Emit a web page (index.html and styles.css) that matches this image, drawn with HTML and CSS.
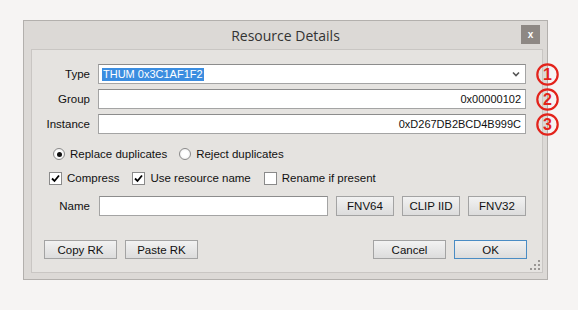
FILE: index.html
```html
<!DOCTYPE html>
<html lang="en">

<head>
    <meta charset="UTF-8">
    <title>Resource Details</title>
    <link rel="stylesheet" href="styles.css">
</head>

<body>
    <div class="window">
        <div class="titlebar">
            <span></span>
            <div class="title">Resource Details</div>
            <button class="close">x</button>
        </div>

        <div class="panel">
            <div class="fields">
                <label class="lbl">Type</label>
                <div class="field combo">
                    <span class="sel">THUM 0x3C1AF1F2</span>
                    <svg class="arrow" width="8" height="6" viewBox="0 0 8 6"><polyline points="1,1.5 4,4.5 7,1.5" fill="none" stroke="#555" stroke-width="1.6"/></svg>
                    <svg class="mark" width="23" height="23" viewBox="0 0 23 23"><circle cx="11.5" cy="11.5" r="10.2" fill="none" stroke="#e3231b" stroke-width="2.2"/><text x="11.5" y="17" text-anchor="middle">1</text></svg>
                </div>

                <label class="lbl">Group</label>
                <div class="field hex">0x00000102<svg class="mark" width="23" height="23" viewBox="0 0 23 23"><circle cx="11.5" cy="11.5" r="10.2" fill="none" stroke="#e3231b" stroke-width="2.2"/><text x="11.5" y="17" text-anchor="middle">2</text></svg></div>

                <label class="lbl">Instance</label>
                <div class="field hex">0xD267DB2BCD4B999C<svg class="mark" width="23" height="23" viewBox="0 0 23 23"><circle cx="11.5" cy="11.5" r="10.2" fill="none" stroke="#e3231b" stroke-width="2.2"/><text x="11.5" y="17" text-anchor="middle">3</text></svg></div>
            </div>

            <div class="radios">
                <label class="opt"><span class="radio on"></span>Replace duplicates</label>
                <label class="opt"><span class="radio"></span>Reject duplicates</label>
            </div>

            <div class="checks">
                <label class="opt">
                    <span class="check"><svg width="11" height="11" viewBox="0 0 11 11"><polyline points="2,5.5 4.5,8 9,2.5" fill="none" stroke="#000" stroke-width="1.8"/></svg></span>Compress
                </label>
                <label class="opt">
                    <span class="check"><svg width="11" height="11" viewBox="0 0 11 11"><polyline points="2,5.5 4.5,8 9,2.5" fill="none" stroke="#000" stroke-width="1.8"/></svg></span>Use resource name
                </label>
                <label class="opt"><span class="check"></span>Rename if present</label>
            </div>

            <div class="fields name-row">
                <label class="lbl">Name</label>
                <div class="name-line">
                    <div class="field name"></div>
                    <button class="btn small">FNV64</button>
                    <button class="btn small">CLIP IID</button>
                    <button class="btn small">FNV32</button>
                </div>
            </div>

            <div class="bottom">
                <button class="btn wide">Copy RK</button>
                <button class="btn wide">Paste RK</button>
                <span class="spacer"></span>
                <button class="btn wide">Cancel</button>
                <button class="btn wide ok">OK</button>
            </div>

            <svg class="grip" width="10" height="10" viewBox="0 0 10 10">
                <rect x="8" y="0" width="2" height="2" fill="#9a9794"/>
                <rect x="4" y="4" width="2" height="2" fill="#9a9794"/>
                <rect x="8" y="4" width="2" height="2" fill="#9a9794"/>
                <rect x="0" y="8" width="2" height="2" fill="#9a9794"/>
                <rect x="4" y="8" width="2" height="2" fill="#9a9794"/>
                <rect x="8" y="8" width="2" height="2" fill="#9a9794"/>
            </svg>
        </div>
    </div>
</body>

</html>
```

FILE: styles.css
```css
body {
    margin: 0;
    padding: 20px 0 0 23px;
    background: #f6f4f3;
    font-family: 'Liberation Sans', Arial, sans-serif;
    font-size: 11.5px;
    color: #111;
}

.window {
    width: 525px;
    height: 260px;
    box-sizing: border-box;
    border: 1px solid #b3b0ad;
    background: #dcd9d6;
    display: flex;
    flex-direction: column;
}

.titlebar {
    height: 29px;
    display: grid;
    grid-template-columns: 1fr auto 1fr;
    align-items: center;
}

.title {
    font-family: 'Open Sans', sans-serif;
    font-size: 14px;
    color: #333;
}

.close {
    justify-self: end;
    margin: -1px 7px 0 0;
    width: 19px;
    height: 19px;
    padding: 0;
    border: none;
    background: #8e8884;
    color: #fff;
    font-family: 'Liberation Sans', sans-serif;
    font-size: 10px;
    font-weight: bold;
    line-height: 17px;
}

.panel {
    flex: 1;
    position: relative;
    margin: 0 4px 6px 7px;
    padding: 14px 16px 13px 0;
    border: 1px solid #c9c6c3;
    background: #e5e3e0;
    display: flex;
    flex-direction: column;
}

.fields {
    display: grid;
    grid-template-columns: 58px 1fr;
    column-gap: 8px;
    row-gap: 5px;
}

.lbl {
    text-align: right;
    align-self: center;
}

.field {
    position: relative;
    height: 20px;
    box-sizing: border-box;
    border: 1px solid #a4a4a4;
    border-top-color: #8c8c8c;
    background: #fff;
    display: flex;
    align-items: center;
}

.combo {
    padding: 0 5px 0 3px;
    justify-content: space-between;
}

.sel {
    background: #3b8de0;
    color: #fff;
    line-height: 13px;
    font-size: 11px;
    padding: 0 1px;
}

.hex {
    justify-content: flex-end;
    padding-right: 4px;
    font-size: 11px;
}

.mark {
    position: absolute;
    left: calc(100% + 11px);
    top: 50%;
    margin-top: -11.5px;
}

.mark text {
    font-family: 'Liberation Sans', sans-serif;
    font-size: 16px;
    font-weight: bold;
    fill: #e3231b;
}

.radios,
.checks {
    display: flex;
    align-items: center;
    height: 16px;
}

.radios {
    margin-top: 12px;
    padding-left: 21px;
    gap: 12px;
}

.checks {
    margin-top: 8px;
    padding-left: 17px;
    gap: 13px;
}

.opt {
    display: flex;
    align-items: center;
    gap: 5px;
}

.radio {
    width: 12px;
    height: 12px;
    box-sizing: border-box;
    border: 1px solid #8a8a8a;
    border-radius: 50%;
    background: radial-gradient(circle, #fff 40%, #e6e6e6);
    display: flex;
    align-items: center;
    justify-content: center;
}

.radio.on::after {
    content: '';
    width: 5px;
    height: 5px;
    border-radius: 50%;
    background: #111;
}

.check {
    width: 13px;
    height: 13px;
    box-sizing: border-box;
    border: 1px solid #8a8a8a;
    background: #fff;
    display: flex;
    align-items: center;
    justify-content: center;
}

.name-row {
    margin-top: 10px;
}

.name-line {
    display: flex;
    gap: 8px;
}

.name {
    flex: 1;
    margin-left: 1px;
}

.btn {
    height: 20px;
    padding: 0;
    box-sizing: border-box;
    border: 1px solid #a3a3a3;
    background: linear-gradient(#f2f2f2, #dcdcdc);
    font-family: 'Liberation Sans', Arial, sans-serif;
    font-size: 11.5px;
    color: #111;
}

.small {
    width: 58px;
}

.bottom {
    margin-top: 24px;
    padding-left: 12px;
    display: flex;
    gap: 8px;
}

.bottom .btn {
    height: 19px;
}

.wide {
    width: 73px;
}

.spacer {
    flex: 1;
}

.ok {
    border-color: #4a8cc4;
    margin-right: -1px;
}

.grip {
    position: absolute;
    right: 2px;
    bottom: 2px;
}
```
